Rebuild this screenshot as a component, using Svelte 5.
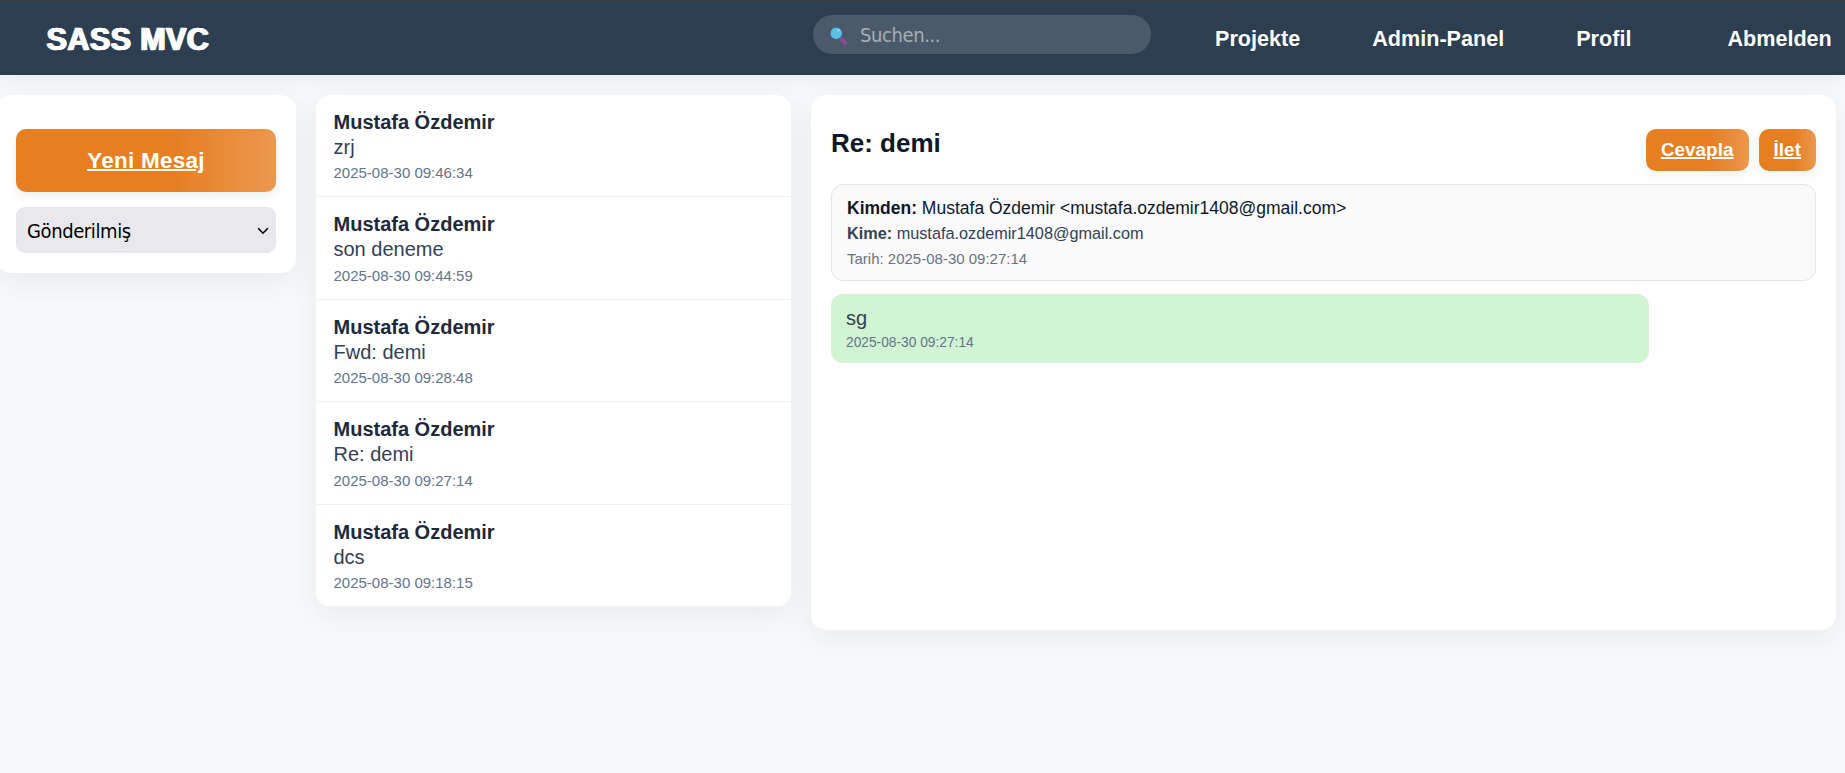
<script>
  const nav = ['Projekte', 'Admin-Panel', 'Profil', 'Abmelden'];
  const mails = [
    { from: 'Mustafa Özdemir', subject: 'zrj', date: '2025-08-30 09:46:34' },
    { from: 'Mustafa Özdemir', subject: 'son deneme', date: '2025-08-30 09:44:59' },
    { from: 'Mustafa Özdemir', subject: 'Fwd: demi', date: '2025-08-30 09:28:48' },
    { from: 'Mustafa Özdemir', subject: 'Re: demi', date: '2025-08-30 09:27:14' },
    { from: 'Mustafa Özdemir', subject: 'dcs', date: '2025-08-30 09:18:15' }
  ];
</script>

<header>
  <div class="brand">SASS MVC</div>
  <div class="search">
    <svg width="20" height="20" viewBox="0 0 20 20" aria-hidden="true">
      <path d="M12.6 13.4l3.9 3.8" stroke="#8a4c93" stroke-width="4" stroke-linecap="round" />
      <circle cx="7.2" cy="7.3" r="6.2" fill="#5bc0e2" stroke="#4a5486" stroke-width="1" />
      <circle cx="9.5" cy="4.2" r="1.2" fill="#9bd9ee" />
    </svg>
    <span>Suchen...</span>
  </div>
  <nav>
    {#each nav as item}
      <span class="link">{item}</span>
    {/each}
  </nav>
</header>

<main>
  <aside class="card">
    <div class="btn compose">Yeni Mesaj</div>
    <div class="select">
      <span>Gönderilmiş</span>
      <svg width="12" height="8" viewBox="0 0 12 8" aria-hidden="true">
        <path d="M1.2 1.2L6 6.2l4.8-5" fill="none" stroke="#000" stroke-width="1.6" />
      </svg>
    </div>
  </aside>

  <section class="card list">
    {#each mails as mail}
      <article>
        <div class="from">{mail.from}</div>
        <div class="subject">{mail.subject}</div>
        <div class="date">{mail.date}</div>
      </article>
    {/each}
  </section>

  <section class="card detail">
    <div class="top">
      <h2>Re: demi</h2>
      <div class="actions">
        <div class="btn">Cevapla</div>
        <div class="btn">İlet</div>
      </div>
    </div>
    <div class="meta">
      <div class="m1"><b>Kimden:</b> Mustafa Özdemir &lt;mustafa.ozdemir1408@gmail.com&gt;</div>
      <div class="m2"><b>Kime:</b> mustafa.ozdemir1408@gmail.com</div>
      <div class="m3">Tarih: 2025-08-30 09:27:14</div>
    </div>
    <div class="bubble">
      <div class="text">sg</div>
      <div class="time">2025-08-30 09:27:14</div>
    </div>
  </section>
</main>

<style>
  :global(body) {
    background: #f8f9fb;
    font-family: 'Liberation Sans', Arial, sans-serif;
  }
  header, header *, main, main * {
    box-sizing: border-box;
  }
  header {
    height: 75px;
    background: #2c3e50;
    border-top: 1px solid #3a3a42;
    display: flex;
    align-items: flex-start;
    color: #fff;
    box-shadow: 0 4px 20px rgba(44, 62, 80, 0.08);
  }
  .brand {
    width: 813px;
    padding: 20px 0 0 46px;
    font-size: 30.5px;
    line-height: 37px;
    font-weight: 700;
    letter-spacing: 0.4px;
    -webkit-text-stroke: 0.5px #fff;
    text-shadow: 1px 0 #fff, 1.6px 0 #fff;
    white-space: nowrap;
  }
  .search {
    width: 338px;
    height: 39px;
    margin-top: 14px;
    border-radius: 20px;
    background: rgba(255, 255, 255, 0.15);
    display: flex;
    align-items: center;
    padding-left: 16px;
    font-family: 'DejaVu Sans Condensed', 'DejaVu Sans', sans-serif;
    font-stretch: condensed;
    font-size: 20px;
    letter-spacing: -0.4px;
    color: #a6adb4;
  }
  .search svg {
    margin: 3px 11px 0 0;
  }
  nav {
    flex: 1;
    display: flex;
    padding: 25px 0 0 64px;
    font-size: 21.6px;
    line-height: 26px;
    font-weight: 700;
    white-space: nowrap;
  }
  .link {
    margin-right: 72px;
  }
  .link:nth-child(3) {
    margin-right: 96px;
  }
  .link:last-child {
    margin-right: 0;
  }
  main {
    display: flex;
    align-items: flex-start;
    gap: 20px;
    min-height: 698px;
    padding: 20px 9px 0 0;
  }
  .card {
    background: #fff;
    border-radius: 15px;
    box-shadow: 0 10px 30px rgba(44, 62, 80, 0.08);
  }
  aside {
    width: 300px;
    margin-left: -4px;
    height: 178px;
    padding: 34px 20px 0;
  }
  .btn {
    background: linear-gradient(90deg, #e67e22 0%, #e67e22 60%, #eb984e 100%);
    color: #fff;
    font-weight: 700;
    text-decoration: underline;
    text-decoration-thickness: 2px;
    border-radius: 10px;
    box-shadow: 0 4px 10px rgba(44, 62, 80, 0.08);
    text-align: center;
    white-space: nowrap;
  }
  .compose {
    height: 63px;
    font-size: 22.5px;
    line-height: 63px;
    letter-spacing: 0.25px;
  }
  .select {
    margin-top: 15px;
    height: 46px;
    border: 1px solid #e2e8f0;
    border-radius: 9px;
    background: #e9e9ed;
    display: flex;
    align-items: center;
    justify-content: space-between;
    padding: 1px 6px 0 10px;
    font-family: 'DejaVu Sans Condensed', 'DejaVu Sans', sans-serif;
    font-stretch: condensed;
    font-size: 20px;
    letter-spacing: -0.4px;
    color: #000;
  }
  .list {
    width: 475px;
    overflow: hidden;
  }
  article {
    height: 102.45px;
    padding: 15px 17.5px 0;
    border-bottom: 1px solid #f1f1f1;
    line-height: 25px;
  }
  .from {
    font-size: 20px;
    font-weight: 700;
    color: #1e293b;
  }
  .subject {
    font-size: 20px;
    line-height: 25.4px;
    color: #334155;
  }
  .date {
    font-size: 15px;
    color: #64748b;
  }
  .detail {
    flex: 1;
    height: 535px;
    padding: 34px 20px 0;
  }
  .top {
    display: flex;
    justify-content: space-between;
    align-items: flex-start;
    height: 55px;
  }
  h2 {
    margin: 0;
    font-size: 26px;
    line-height: 28px;
    color: #0f172a;
  }
  .actions {
    display: flex;
    gap: 10px;
  }
  .actions .btn {
    height: 42px;
    padding: 0 15px;
    font-size: 18.75px;
    line-height: 42px;
    letter-spacing: 0.1px;
  }
  .meta {
    height: 97px;
    border: 1px solid #e5e5e5;
    border-radius: 12px;
    background: #fafafa;
    padding: 11px 15px;
    line-height: 25px;
  }
  .m1 {
    font-size: 17.5px;
    color: #0f172a;
  }
  .m2 {
    font-size: 16.25px;
    color: #334155;
  }
  .m3 {
    font-size: 15px;
    color: #6b7280;
  }
  .bubble {
    margin-top: 13px;
    width: 818px;
    height: 69px;
    border-radius: 12px;
    background: #d1f4d3;
    padding: 12px 15px 0;
  }
  .text {
    font-size: 20px;
    line-height: 24px;
    color: #334155;
  }
  .time {
    font-size: 13.75px;
    line-height: 25.4px;
    color: #64748b;
  }
</style>
